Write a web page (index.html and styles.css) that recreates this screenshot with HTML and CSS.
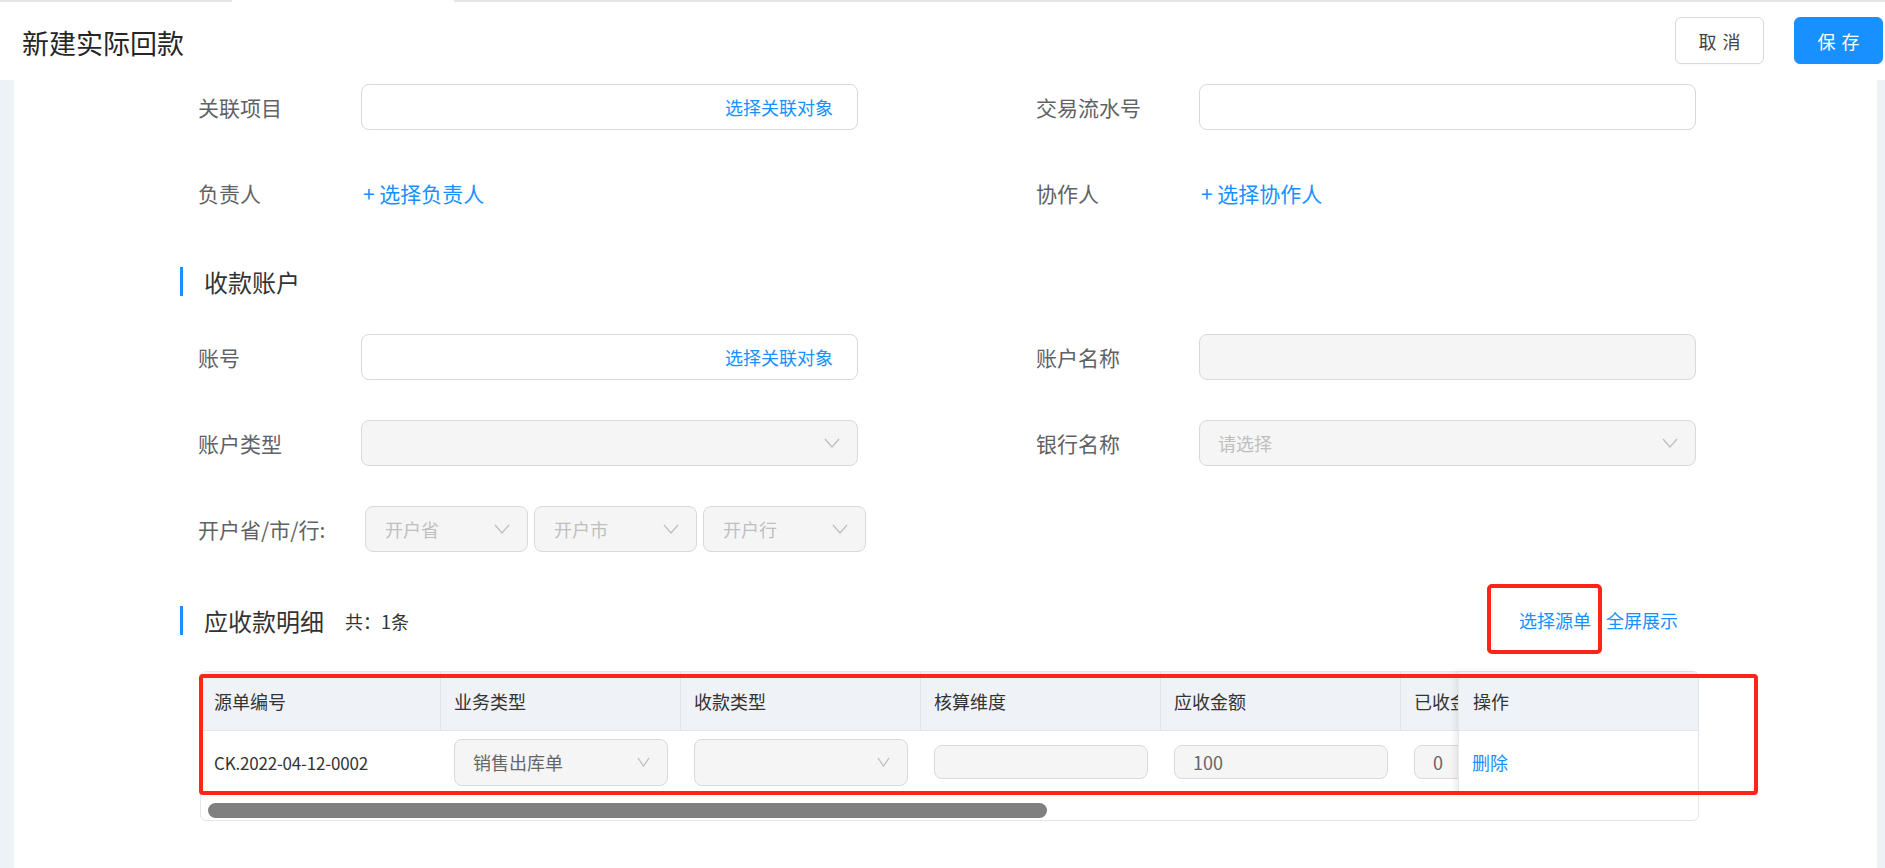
FILE: index.html
```html
<!DOCTYPE html>
<html lang="zh-CN">
<head>
<meta charset="utf-8">
<title>新建实际回款</title>
<link rel="stylesheet" href="styles.css">
</head>
<body>
<div class="tabline"><span class="tl-a"></span><span class="tl-gap"></span><span class="tl-b"></span></div>
<header class="topbar">
  <h1 class="title">新建实际回款</h1>
  <div class="actions">
    <button class="btn">取消</button>
    <button class="btn btn-primary">保存</button>
  </div>
</header>
<div class="page">
  <div class="gutter gutter-l"></div>
  <main class="panel">
    <div class="row">
      <div class="field"><span class="lbl">关联项目</span><div class="ctl"><div class="input"><span class="link-in">选择关联对象</span></div></div></div>
      <div class="field"><span class="lbl">交易流水号</span><div class="ctl"><div class="input"></div></div></div>
    </div>
    <div class="row">
      <div class="field"><span class="lbl">负责人</span><div class="ctl"><span class="add">+ 选择负责人</span></div></div>
      <div class="field"><span class="lbl">协作人</span><div class="ctl"><span class="add">+ 选择协作人</span></div></div>
    </div>

    <div class="sec-title sec-1"><span class="bar"></span><span class="sec-text">收款账户</span></div>

    <div class="row">
      <div class="field"><span class="lbl">账号</span><div class="ctl"><div class="input"><span class="link-in">选择关联对象</span></div></div></div>
      <div class="field"><span class="lbl">账户名称</span><div class="ctl"><div class="input disabled"></div></div></div>
    </div>
    <div class="row">
      <div class="field"><span class="lbl">账户类型</span><div class="ctl"><div class="input disabled select"><span class="ph"></span><svg class="chev" viewBox="0 0 16 10"><path d="M1 1 L8 9 L15 1" /></svg></div></div></div>
      <div class="field"><span class="lbl">银行名称</span><div class="ctl"><div class="input disabled select"><span class="ph">请选择</span><svg class="chev" viewBox="0 0 16 10"><path d="M1 1 L8 9 L15 1" /></svg></div></div></div>
    </div>
    <div class="row">
      <div class="field"><span class="lbl">开户省/市/行:</span><div class="ctl">
        <div class="triple">
          <div class="input disabled select small"><span class="ph">开户省</span><svg class="chev" viewBox="0 0 16 10"><path d="M1 1 L8 9 L15 1" /></svg></div>
          <div class="input disabled select small"><span class="ph">开户市</span><svg class="chev" viewBox="0 0 16 10"><path d="M1 1 L8 9 L15 1" /></svg></div>
          <div class="input disabled select small"><span class="ph">开户行</span><svg class="chev" viewBox="0 0 16 10"><path d="M1 1 L8 9 L15 1" /></svg></div>
        </div>
      </div></div>
    </div>

    <div class="sec-title sec-2">
      <span class="bar"></span><span class="sec-text">应收款明细</span><span class="count">共：1条</span>
      <div class="links"><span class="link marked">选择源单</span><span class="link">全屏展示</span></div>
    </div>

    <div class="tbl">
      <div class="tbl-body">
        <div class="thead">
          <div class="th">源单编号</div>
          <div class="th">业务类型</div>
          <div class="th">收款类型</div>
          <div class="th">核算维度</div>
          <div class="th">应收金额</div>
          <div class="th">已收金额</div>
        </div>
        <div class="trow">
          <div class="td code">CK.2022-04-12-0002</div>
          <div class="td"><div class="cell-select"><span class="val">销售出库单</span><svg class="chev chev-sm" viewBox="0 0 13 10"><path d="M1 1 L6.5 9 L12 1" /></svg></div></div>
          <div class="td"><div class="cell-select"><span class="val"></span><svg class="chev chev-sm" viewBox="0 0 13 10"><path d="M1 1 L6.5 9 L12 1" /></svg></div></div>
          <div class="td"><div class="cell-input"></div></div>
          <div class="td"><div class="cell-input">100</div></div>
          <div class="td"><div class="cell-input">0</div></div>
        </div>
      </div>
      <div class="hscroll"><div class="thumb"></div></div>
      <div class="fixed-col">
        <div class="fth">操作</div>
        <div class="ftd"><span class="del">删除</span></div>
      </div>
      <div class="mark-box"></div>
    </div>
  </main>
  <div class="gutter gutter-r"></div>
</div>
</body>
</html>
```
FILE: styles.css
```css
* { box-sizing: border-box; }
html, body { margin: 0; padding: 0; }
body {
  width: 1885px;
  height: 868px;
  overflow: hidden;
  background: #fff;
  font-family: "Noto Sans CJK SC", "Microsoft YaHei", "Liberation Sans", sans-serif;
  color: #333;
}

/* top tab strip */
.tabline { display: flex; height: 2px; }
.tl-a { width: 232px; background: #e6e6e6; }
.tl-gap { width: 222px; background: #fff; }
.tl-b { flex: 1; background: #e6e6e6; }

/* header */
.topbar {
  height: 78px;
  display: flex;
  justify-content: space-between;
  align-items: flex-start;
  background: #fff;
}
.title {
  margin: 21px 0 0 22px;
  font-size: 27px;
  font-weight: 400;
  line-height: 40px;
  color: #262626;
}
.actions { display: flex; gap: 30px; margin: 15px 2px 0 0; }
.btn {
  width: 89px;
  height: 47px;
  padding: 0 0 0 0.34em;
  border: 1px solid #d9d9d9;
  border-radius: 6px;
  background: #fff;
  font-family: inherit;
  font-size: 18px;
  letter-spacing: 0.34em;
  color: #444;
  box-shadow: 0 2px 0 rgba(0,0,0,0.015);
}
.btn-primary { background: #1890ff; border-color: #1890ff; color: #fff; }

/* page body */
.page { display: flex; height: 788px; }
.gutter { background: #eef1f5; }
.gutter-l { width: 14px; }
.gutter-r { width: 8px; }
.panel {
  flex: 1;
  display: flex;
  flex-direction: column;
  align-items: flex-start;
  background: #fff;
  padding: 4px 0 0 166px;
}

/* form rows */
.row { display: flex; gap: 178px; height: 46px; margin-bottom: 40px; padding-left: 18px; flex: none; }
.field { width: 660px; display: flex; align-items: center; flex: none; }
.lbl { width: 163px; flex: none; font-size: 21px; line-height: 1; color: #606266; }
.ctl { flex: 1; height: 100%; display: flex; align-items: center; }
.input {
  width: 100%;
  height: 46px;
  border: 1px solid #d9d9d9;
  border-radius: 8px;
  background: #fff;
  display: flex;
  align-items: center;
  justify-content: flex-end;
  padding: 0 24px 0 18px;
}
.input.disabled { background: #f5f5f5; }
.input.select { justify-content: space-between; padding: 0 17px 0 18px; }
.ph { font-size: 18px; color: #bfbfbf; }
.link-in { font-size: 18px; color: #1890ff; }
.add { font-size: 21px; color: #1890ff; margin-left: 2px; }
.chev { width: 16px; height: 10px; flex: none; }
.chev path { fill: none; stroke: #bfbfbf; stroke-width: 1.3; }

.triple { display: flex; gap: 6px; margin-left: 4px; height: 46px; }
.input.small { width: 163px; flex: none; padding: 0 17px 0 19px; }

/* section titles */
.sec-title { display: flex; align-items: center; height: 29px; flex: none; }
.sec-1 { margin: 11px 0 38px; }
.sec-2 { margin: 14px 0 36px; width: 1519px; padding-right: 21px; }
.bar { width: 3px; height: 29px; background: #1890ff; flex: none; }
.sec-text { margin-left: 21px; font-size: 24px; line-height: 29px; color: #333; }
.count { margin-left: 21px; font-size: 18px; color: #333; }
.links { margin-left: auto; display: flex; gap: 15px; font-size: 18px; line-height: 29px; color: #1890ff; }
.link { position: relative; }
.marked::after {
  content: "";
  position: absolute;
  left: -32px;
  top: -22px;
  width: 107px;
  height: 62px;
  border: 4px solid #ff2418;
  border-radius: 5px;
}

/* table */
.tbl {
  position: relative;
  flex: none;
  margin-left: 20px;
  width: 1499px;
  height: 150px;
  border: 1px solid #e6e6e6;
  border-radius: 6px;
}
.tbl-body { width: 1257px; overflow: hidden; border-top-left-radius: 6px; }
.thead, .trow { display: flex; }
.thead { height: 59px; background: #eff2f6; border-bottom: 1px solid #e4e7eb; }
.th {
  flex: none;
  width: 240px;
  padding-left: 13px;
  display: flex;
  align-items: center;
  font-size: 18px;
  color: #333;
  border-right: 1px solid #e2e5ea;
}
.trow { height: 62px; }
.td { flex: none; width: 240px; padding: 0 13px; display: flex; align-items: center; }
.code { font-size: 17px; color: #333; letter-spacing: -0.2px; }
.cell-select {
  width: 100%;
  height: 47px;
  border: 1px solid #d9d9d9;
  border-radius: 8px;
  background: #f5f5f5;
  display: flex;
  align-items: center;
  justify-content: space-between;
  padding: 0 17px 0 18px;
}
.val { font-size: 18px; color: #666; }
.chev-sm { width: 13px; height: 10px; }
.cell-input {
  width: 100%;
  height: 34px;
  border: 1px solid #d9d9d9;
  border-radius: 8px;
  background: #f5f5f5;
  display: flex;
  align-items: center;
  padding: 0 18px;
  font-size: 18px;
  color: #666;
}
.hscroll { height: 27px; padding: 10px 0 0 7px; }
.thumb { width: 839px; height: 15px; border-radius: 8px; background: #808080; }

.fixed-col {
  position: absolute;
  top: 0;
  right: 0;
  width: 240px;
  height: 121px;
  background: #fff;
  box-shadow: -3px 0 6px rgba(0,0,0,0.08);
  border-left: 1px solid #e8e8e8;
  border-top-right-radius: 6px;
  overflow: hidden;
}
.fth {
  height: 59px;
  background: #eff2f6;
  border-bottom: 1px solid #e4e7eb;
  display: flex;
  align-items: center;
  padding-left: 14px;
  font-size: 18px;
  color: #333;
}
.ftd { height: 62px; display: flex; align-items: center; padding-left: 13px; }
.del { font-size: 18px; color: #1890ff; }

.mark-box {
  position: absolute;
  left: -2px;
  top: 2px;
  width: 1559px;
  height: 121px;
  border: 4px solid #ff2418;
  border-radius: 4px;
  z-index: 3;
  pointer-events: none;
}
```
